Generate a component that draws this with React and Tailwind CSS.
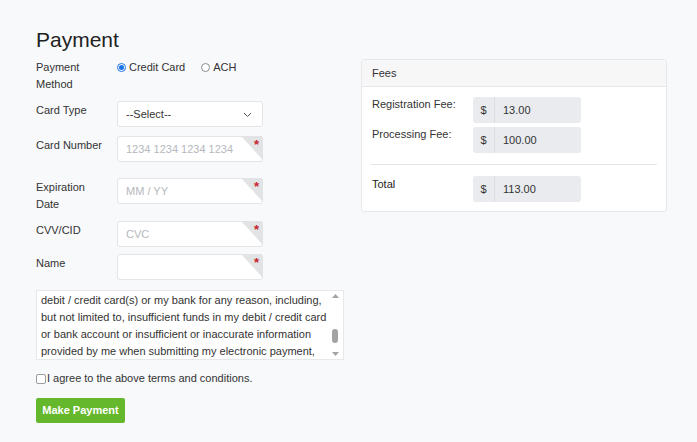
import React from "react";

const font = { fontFamily: '"Liberation Sans", Arial, sans-serif' };

function RequiredInput({ placeholder }) {
  return (
    <div className="relative w-[146px] h-[26px]">
      <input
        type="text"
        placeholder={placeholder}
        className="w-full h-full border border-[#e3e5e8] rounded-[3px] bg-white pl-[8px] pr-[24px] text-[11px] text-[#333] placeholder:text-[#b5b8bd] outline-none"
      />
      <div className="absolute top-0 right-0 w-[22px] h-[24px] bg-[#e2e3e5] [clip-path:polygon(0_0,100%_0,100%_100%)] rounded-tr-[3px]" />
      <span className="absolute top-[2px] right-[4px] text-[13px] leading-[13px] font-bold text-[#c8232c]">
        *
      </span>
    </div>
  );
}

function FormRow({ label, children, className = "" }) {
  return (
    <div className={`flex items-start ${className}`}>
      <div className="w-[81px] pr-[8px] pt-[1px] text-[11px] leading-[17px] text-[#333]">
        {label}
      </div>
      {children}
    </div>
  );
}

function Radio({ checked, label }) {
  return (
    <label className="flex items-center gap-[3px] text-[11px] text-[#333]">
      {checked ? (
        <span className="w-[9px] h-[9px] rounded-full border border-[#1a73e8] flex items-center justify-center bg-white">
          <span className="w-[5px] h-[5px] rounded-full bg-[#1a73e8]" />
        </span>
      ) : (
        <span className="w-[9px] h-[9px] rounded-full border border-[#8a8d91] bg-white" />
      )}
      <span>{label}</span>
    </label>
  );
}

function FeeInput({ value }) {
  return (
    <div className="flex w-[108px] h-[26px] rounded-[3px] bg-[#e9ebee] text-[11px] text-[#333]">
      <span className="w-[22px] flex items-center justify-center border-r border-[#dadde1]">
        $
      </span>
      <span className="flex items-center pl-[8px]">{value}</span>
    </div>
  );
}

const terms = [
  "debit / credit card(s) or my bank for any reason, including,",
  "but not limited to, insufficient funds in my debit / credit card",
  "or bank account or insufficient or inaccurate information",
  "provided by me when submitting my electronic payment,",
];

export default function App() {
  return (
    <div className="min-h-[442px] w-full bg-[#f8f9fb]" style={font}>
      <div className="flex gap-[17px] pl-[36px] pt-[28px]">
        {/* Left column */}
        <div className="w-[308px] flex flex-col">
          <h1 className="text-[21px] leading-[24px] text-[#222]">Payment</h1>

          <FormRow label={<>Payment<br />Method</>} className="mt-[6px]">
            <div className="flex gap-[16px] pt-[1px]">
              <Radio checked label="Credit Card" />
              <Radio label="ACH" />
            </div>
          </FormRow>

          <FormRow label="Card Type" className="mt-[8px]">
            <div className="relative w-[146px] h-[26px] border border-[#e3e5e8] rounded-[3px] bg-white flex items-center pl-[8px] text-[11px] text-[#333]">
              --Select--
              <svg
                className="absolute right-[10px] top-[10px]"
                width="9"
                height="6"
                viewBox="0 0 9 6"
                fill="none"
                stroke="#555"
                strokeWidth="1"
              >
                <path d="M1 1l3.5 3.5L8 1" />
              </svg>
            </div>
          </FormRow>

          <FormRow label="Card Number" className="mt-[9px]">
            <RequiredInput placeholder="1234 1234 1234 1234" />
          </FormRow>

          <FormRow label={<>Expiration<br />Date</>} className="mt-[16px]">
            <RequiredInput placeholder="MM / YY" />
          </FormRow>

          <FormRow label="CVV/CID" className="mt-[8px]">
            <RequiredInput placeholder="CVC" />
          </FormRow>

          <FormRow label="Name" className="mt-[7px]">
            <RequiredInput placeholder="" />
          </FormRow>

          {/* Terms box */}
          <div className="mt-[10px] h-[70px] w-[308px] border border-[#e6e8eb] bg-white flex">
            <div className="flex-1 pl-[4px] pt-[1px] text-[11px] leading-[17px] text-[#333] overflow-hidden">
              {terms.map((line) => (
                <div key={line} className="whitespace-nowrap">
                  {line}
                </div>
              ))}
            </div>
            <div className="w-[12px] flex flex-col items-center justify-between py-[3px] mr-[2px]">
              <svg width="7" height="4" viewBox="0 0 7 4">
                <path d="M0 4L3.5 0L7 4Z" fill="#a3a3a3" />
              </svg>
              <div className="w-[6px] h-[14px] rounded-[3px] bg-[#a3a3a3] mt-[22px]" />
              <svg width="7" height="4" viewBox="0 0 7 4">
                <path d="M0 0L3.5 4L7 0Z" fill="#a3a3a3" />
              </svg>
            </div>
          </div>

          <label className="mt-[10px] flex items-center h-[17px] text-[11px] text-[#333]">
            <span className="w-[10px] h-[10px] border border-[#9a9da1] rounded-[2px] bg-white mr-[1px]" />
            I agree to the above terms and conditions.
          </label>

          <button className="mt-[11px] w-[89px] h-[25px] rounded-[2px] bg-[#65b82c] text-white text-[11px] font-bold">
            Make Payment
          </button>
        </div>

        {/* Fees panel */}
        <div className="mt-[31px] w-[306px] self-start border border-[#e6e8eb] rounded-[3px] bg-white">
          <div className="h-[27px] bg-[#f7f7f8] border-b border-[#e6e8eb] flex items-center pl-[10px] text-[11px] text-[#333]">
            Fees
          </div>
          <div className="pt-[10px] pb-[9px] px-[9px]">
            <div className="flex items-start pl-[1px]">
              <div className="w-[101px] text-[11px] leading-[17px] text-[#333] -mt-[1px]">
                Registration Fee:
              </div>
              <FeeInput value="13.00" />
            </div>
            <div className="flex items-start pl-[1px] mt-[4px]">
              <div className="w-[101px] text-[11px] leading-[17px] text-[#333] -mt-[1px]">
                Processing Fee:
              </div>
              <FeeInput value="100.00" />
            </div>
            <div className="my-[11px] border-t border-[#e3e5e8]" />
            <div className="flex items-start pl-[1px]">
              <div className="w-[101px] text-[11px] leading-[17px] text-[#222]">
                Total
              </div>
              <FeeInput value="113.00" />
            </div>
          </div>
        </div>
      </div>
    </div>
  );
}
